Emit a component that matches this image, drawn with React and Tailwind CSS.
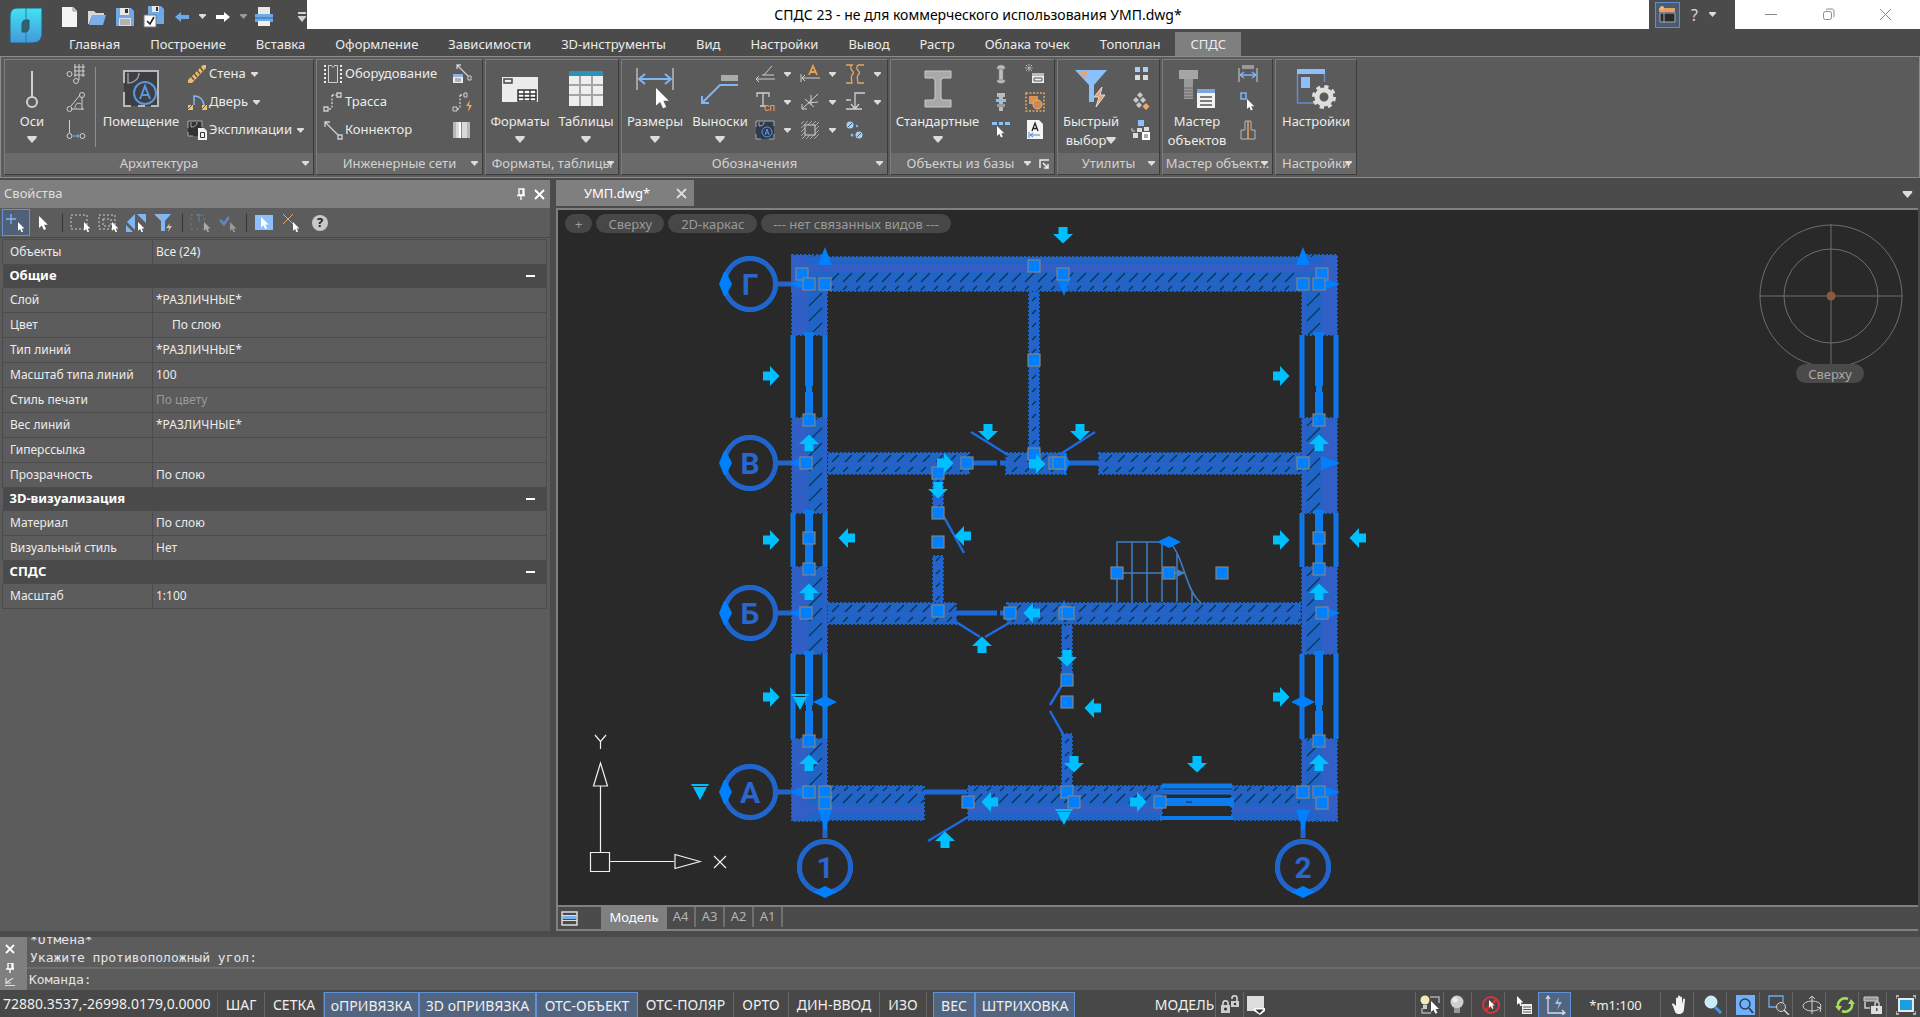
import React from "react";

const L = "#d0d0d0";
const B = "#7fb6f5";
const O = "#e6a664";

function Svg({ w = 20, h = 20, vb, children, cls = "" }) {
  return (
    <svg width={w} height={h} viewBox={vb || `0 0 ${w} ${h}`} fill="none" className={"shrink-0 " + cls} aria-hidden="true">
      {children}
    </svg>
  );
}

const Tri = ({ w = 7, h = 5, c = "#dcdcdc" }) => (
  <Svg w={w} h={h} vb="0 0 8 6">
    <path d="M0 0h8v1.5L4 6 0 1.5z" fill={c} />
  </Svg>
);

const Cursor = ({ x = 0, y = 0, s = 1, c = "#fff" }) => (
  <path transform={`translate(${x} ${y}) scale(${s})`} d="M0 0v11l2.6-2.3 1.8 4 2-.9-1.8-3.8H8z" fill={c} />
);

/* ---------- quick access icons ---------- */
const qa = {
  file: <Svg w={18} h={22}><path d="M1 1h11l4 4v16H1z" fill="#f4f4f4" /><path d="M12 1v4h4" fill="#cfcfcf" stroke="#999" /></Svg>,
  open: <Svg w={20} h={20}><path d="M1 4h6l2 2h8v3H5L2 17H1z" fill="#d8d8d8" /><path d="M5 8h14l-3 10H2z" fill="#79aee8" /></Svg>,
  save: <Svg w={20} h={20}><path d="M1 1h15l3 3v15H1z" fill="#6fa8e6" /><path d="M5 1h9v7H5z" fill="#e8e8e8" /><path d="M10 2h3v4h-3z" fill="#333" /><path d="M4 11h12v8H4z" fill="#ddd" /><path d="M5 13h10M5 15h10M5 17h10" stroke="#888" /></Svg>,
  saveAll: <Svg w={22} h={22}><path d="M5 0h13l3 3v15H5z" fill="#6fa8e6" /><path d="M9 0h7v6H9z" fill="#e8e8e8" /><path d="M13 1h2v4h-2z" fill="#333" /><path d="M1 9h12v12H1z" fill="#fff" stroke="#777" /><path d="M4 15l3 3 4-7" stroke="#222" strokeWidth="1.6" /></Svg>,
  undo: <Svg w={14} h={12}><path d="M0 6l6-5v3h8v4H6v3z" fill="#6fa8e6" /></Svg>,
  redo: <Svg w={14} h={12}><path d="M14 6L8 1v3H0v4h8v3z" fill="#fff" /></Svg>,
  print: <Svg w={20} h={20}><path d="M4 0h12v7H4z" fill="#e8e8e8" /><path d="M1 7h18v8H1z" fill="#6fa8e6" /><path d="M1 10h18v2H1z" fill="#4d88cc" /><path d="M4 14h12v5H4z" fill="#f0f0f0" /></Svg>,
};

/* ---------- ribbon icons ---------- */
const big = {
  axis: <Svg w={36} h={38}><path d="M18 1v26" stroke={L} strokeWidth="2" /><circle cx="18" cy="32" r="5" stroke={L} strokeWidth="2" /></Svg>,
  room: <Svg w={36} h={38}><path d="M1 1h34v35H1z" fill="#3d3f42" /><path d="M1 13V1h34v35h-7M22 36h-7M8 36H1V22" stroke="#b8b8b8" strokeWidth="2" /><path d="M5 3v10c6 0 11-4 11-10" stroke="#999" strokeWidth="1.5" /><circle cx="22" cy="23" r="11" stroke="#5b95dc" strokeWidth="2" /><path d="M17 29l5-13 5 13M19 25h6" stroke="#5b95dc" strokeWidth="2" /></Svg>,
  formats: <Svg w={38} h={30}><path d="M1 3h36v25H1z" fill="#ececec" /><path d="M3 5h8v4H3z" fill="#eee" stroke="#444" strokeWidth="1.5" /><path d="M17 16h18v11H17z" fill="#fff" stroke="#333" strokeWidth="1.5" /><path d="M17 20h18M17 23.500h18M23 16v11M29 16v11" stroke="#333" strokeWidth="1.3" /></Svg>,
  tables: <Svg w={36} h={38}><path d="M1 1h34v35H1z" fill="#eee" /><path d="M1 1h34v5H1z" fill="#2b93b8" /><path d="M1 15h34M1 25h34M12 6v30M24 6v30" stroke="#a5a5a5" strokeWidth="2" /></Svg>,
  dims: <Svg w={38} h={44}><path d="M1 1v22M37 1v22" stroke="#bbb" strokeWidth="1.5" /><path d="M3 12h32M9 7l-6 5 6 5M29 7l6 5-6 5" stroke={B} strokeWidth="2" /><Cursor x={20} y={21} s={1.600} /></Svg>,
  leader: <Svg w={40} h={36}><path d="M21 4h17v6H21z" fill="#aaa" /><path d="M38 14H20L2 32M2 25v7h7" stroke={B} strokeWidth="2" /></Svg>,
  beam: <Svg w={28} h={38}><path d="M1 1h26v7H19c-2 1-2 3-2 4v14c0 1 0 3 2 4h8v7H1v-7h8c2-1 2-3 2-4V12c0-1 0-3-2-4H1z" fill="#a9a9a9" stroke="#cacaca" /></Svg>,
  filter: <Svg w={34} h={40}><path d="M1 1h32L20 16v17h-5V16z" fill="#8cc0fa" /><path d="M4 2h10l-3 8z" fill="#e3a574" /><path d="M28 18l-8 10h5l-3 10 9-12h-5z" fill="#e3a574" stroke="#ddd" /></Svg>,
  wizard: <Svg w={38} h={40}><path d="M1 1h19v9H1z" fill="#a5a5a5" /><path d="M6 10h9v20H6z" fill="#999" /><path d="M6 19h9M6 22h9M6 25h9M6 28h9" stroke="#666" /><path d="M19 20h18v19H19z" fill="#f2f2f2" /><path d="M19 20h18v4H19z" fill="#7aa6dc" /><path d="M22 28h12M22 32h12M22 36h12" stroke="#555" strokeWidth="1.500" /></Svg>,
  settings: (
    <Svg w={40} h={42}>
      <path d="M1 1h28v5H1z" fill="#8cc0fa" /><path d="M1.500 6v29H18M28.500 6v8" stroke="#5f90cc" strokeWidth="1.500" /><path d="M5 9h9v11H5z" fill="#8cc0fa" />
      <circle cx="28" cy="29" r="7" stroke="#dedede" strokeWidth="5" />
      <circle cx="28" cy="29" r="10.500" stroke="#dedede" strokeWidth="3" strokeDasharray="4.200 4.050" />
    </Svg>
  ),
};

const sm = {
  grid: <Svg><path d="M8 3h11M8 7h11M8 11h11M9 0v13M13 0v13M17 0v13M13 13v3" stroke={L} strokeWidth="1" /><circle cx="3.500" cy="10" r="2.500" stroke={L} /><circle cx="10" cy="17" r="2.500" stroke={L} /></Svg>,
  arc: <Svg><path d="M16 5v13M5 17h13M14 3L5 14M15 12c-3-2-6 0-6 4" stroke={L} /><circle cx="16" cy="3" r="2.500" stroke={L} /><circle cx="3.500" cy="17" r="2.500" stroke={L} /></Svg>,
  drop: <Svg><path d="M3.500 0v13" stroke={L} /><circle cx="3.500" cy="16" r="2.500" stroke={L} /><circle cx="16.500" cy="16" r="2.500" stroke={L} /><path d="M7 16h6M11 14l2 2-2 2" stroke={B} /></Svg>,
  wall: <Svg><path d="M1 16L16 1h3v3L5 19H1z" fill="#e8bd72" /><path d="M4 12l3 4M7 9l3 4M10 6l3 4M13 3l3 4" stroke="#6b5733" strokeWidth="1.500" /></Svg>,
  door: <Svg><path d="M7 13V4c5 0 9 3 10 9" stroke={B} strokeWidth="1.500" /><path d="M1 13h5v5H1zM15 13h5v5h-5z" fill="#efc36e" /><path d="M1 17l4-4M15 17l4-4" stroke="#6b5733" /></Svg>,
  expl: <Svg><path d="M1 1h14v15H1z" fill="#333" /><path d="M1 8V1h14v6M1 12v4h5M4 2v5c4 0 6-2 6-5" stroke="#aaa" /><path d="M11 8h6l3 3v9h-9z" fill="#eee" /><path d="M13.500 12.500h4v5h-4z" stroke="#333" /></Svg>,
  equip: <Svg><path d="M5.500 1.500h3c0 2 3 2 3 0h3v17h-9z" stroke={L} /><path d="M2 1v18M18 1v18" stroke="#eee" strokeWidth="2" strokeDasharray="2 2" /></Svg>,
  route: <Svg><path d="M9 3v14M9 3h5M6 17h3" stroke={L} strokeWidth="1.300" strokeDasharray="2 1.500" /><path d="M14 1h4v4h-4zM1 15h4v4H1z" stroke={L} strokeWidth="1.300" /></Svg>,
  conn: <Svg><path d="M2 2l13 13M2 7V2h5" stroke={L} strokeWidth="1.300" /><path d="M15 15h4v4h-4z" stroke={L} strokeWidth="1.300" /></Svg>,
  connList: <Svg><path d="M5 1l11 11M5 5V1h4" stroke={L} strokeWidth="1.300" /><path d="M16 12h3v4h-3z" stroke={L} /><path d="M1 10h10v9H1z" fill="#eee" /><path d="M1 10h10v3H1z" fill="#8fb2dc" /><path d="M3 15h6M3 17h6" stroke="#777" /></Svg>,
  routeBolt: <Svg><path d="M8 3v14M8 3h4M5 17h3" stroke={L} strokeWidth="1.300" strokeDasharray="2 1.500" /><path d="M12 1h3v4h-3zM1 15h4v4H1z" stroke={L} /><path d="M18 8l-4 6h3l-1 6 4-7h-3z" fill={O} /></Svg>,
  book: <Svg><path d="M1 2h17v16H1z" fill="#dadada" /><path d="M1 2h3v16H1zM15 2h3v16h-3z" fill="#b8b8b8" /><path d="M7 2h2v16H7z" fill="#fff" /><path d="M9.500 2v16" stroke="#8a8a8a" /></Svg>,
  lvl: <Svg><path d="M2 15h18M4 12l-3 3 3 3M7 11h12M9 11L17 2" stroke={L} /></Svg>,
  Tsp: <Svg><path d="M2 5V1h12v4M8 1v13M5 14h6" stroke={L} strokeWidth="1.300" /><text x="9" y="19" fontSize="10" fill={O} fontFamily="Roboto">сп</text></Svg>,
  roomS: <Svg><path d="M1 1h18v18H1z" fill="#2f3a4d" /><path d="M1 7V1h18v5M19 14v5h-5M1 14v5h5M4 2v4c3 0 5-1 5-4" stroke="#aaa" /><circle cx="12" cy="12" r="5" stroke="#5b95dc" /><path d="M10 15l2-6 2 6M10.500 13h3" stroke="#5b95dc" /></Svg>,
  Adim: <Svg><path d="M1 10v8M2 14h18M5 11l-3 3 3 3" stroke={L} /><path d="M9 11l4-9 4 9M10.500 8h5" stroke="#f0a050" strokeWidth="1.800" /></Svg>,
  mark: <Svg><path d="M2 17L18 2M2 12v5h5M5 7l9 8M11 3v10M8 11l10-1" stroke={L} /></Svg>,
  insul: <Svg><path d="M1 4l3-3M1 8l7-7M1 12L12 1M1 16L16 1M2 19L19 2M6 19L19 6M10 19l9-9M14 19l5-5" stroke="#aaa" /><rect x="5" y="5" width="10" height="10" fill="#5a5a5a" stroke={L} /></Svg>,
  brk: <Svg><path d="M1 1h6c-5 5 5 6 0 10-2 3 0 5 0 8H1M13 1h6M13 1c-5 5 5 6 0 10-2 3 0 5 0 8h6" stroke={O} strokeWidth="1.300" /></Svg>,
  section: <Svg><path d="M10 17V1h10M1 17h16M6 12l4 5 4-5M1 8h5" stroke={L} strokeWidth="1.300" /></Svg>,
  nodes: <Svg><circle cx="5" cy="5" r="3.500" fill="#a8cdf2" /><circle cx="14" cy="15" r="3.500" fill="#a8cdf2" /><circle cx="7" cy="15" r="1.500" fill={B} /><circle cx="12" cy="6" r="1.200" fill={B} /><path d="M3 7l4-4M12 17l4-4" stroke="#3d5f88" /></Svg>,
  bolt: <Svg><path d="M6 4c0-4 8-4 8 0v1H6zM8 5h4v11H8zM6 16h8v1c0 3-8 3-8 0z" fill="#bcbcbc" stroke="#888" strokeWidth=".5" /></Svg>,
  boltB: <Svg><path d="M6 1h8v4H6zM8 5h4v14H8z" fill="#bbb" /><path d="M5 7h10v3H5z" fill="#8cc0fa" /><path d="M6 12h8v3H6z" fill="#9a9a9a" /></Svg>,
  barSel: <Svg><path d="M1 2h5v3H1zM8 2h4v3H8zM14 2h5v3h-5z" fill="#8cc0fa" /><Cursor x={6} y={6} s={0.9} /></Svg>,
  db: <Svg><path d="M1 1l6 6M7 1L1 7M4 0v8M0 4h8" stroke="#ccc" strokeDasharray="1.500 1" /><path d="M7 9h12v10H7z" fill="#eee" /><path d="M7 9h12v3H7z" fill="#bbb" /><path d="M9 14h8v3H9z" stroke="#555" /></Svg>,
  dbSel: <Svg><rect x="1" y="1" width="18" height="18" stroke={O} strokeWidth="1.500" strokeDasharray="2 1.500" /><path d="M4 4h9v8H4z" fill="#d99355" /><circle cx="12.500" cy="12.500" r="4.500" fill="#c98a55" stroke="#efb884" /></Svg>,
  docA: <Svg><path d="M2 0h12l4 4v15H2z" fill="#f4f4f4" /><path d="M7 11l3-8 3 8M8 8.500h4" stroke="#222" strokeWidth="1.300" /><path d="M4 12v6M5 15h10M8 13l-3 2 3 2" stroke="#4a86cc" /></Svg>,
  four: <Svg><path d="M4 3h5v5H4z" fill="#a9d0fa" /><path d="M4 11h5v5H4zM12 11h5v5h-5z" fill="#dcdcdc" /><path d="M12 3h5v5h-5z" fill="#a9d0fa" /></Svg>,
  dia: <Svg><path d="M9 0l3 3-3 3-3-3zM5 5l3 3-3 3-3-3zM12 5l3 3-3 3-3-3zM8 10l3 3-3 3-3-3z" fill="#c9c9c9" /><path d="M15 11l3.500 3.500L15 18l-3.500-3.500z" fill="#f0a868" /></Svg>,
  tree: <Svg><path d="M7 0h6v6H7z" fill="#8cc0fa" /><path d="M2 13h5v5H2zM6 8h5v4H6zM13 7h5v4h-5z" fill="#ddd" /><path d="M11 12h8v8h-8z" fill="#fff" /><path d="M13 15h4M13 17h4" stroke="#555" /><path d="M1 11h3M1 8v3" stroke="#ccc" /></Svg>,
  dimS: <Svg><path d="M4 1h12v4H4z" fill="#999" /><path d="M1 4v14M19 4v14" stroke={L} /><path d="M2 11h16M6 8l-4 3 4 3M14 8l4 3-4 3" stroke={B} strokeWidth="1.300" /></Svg>,
  pick: <Svg><path d="M3 1h5v6H3z" stroke={B} strokeWidth="1.500" /><Cursor x={9} y={7} s={0.9} /></Svg>,
  part: <Svg><path d="M7 1h6v9h4v9H3v-9h4z" stroke="#bbb" /><path d="M10 1v18" stroke={O} strokeWidth="1.500" /></Svg>,
};

/* ---------- ribbon building blocks ---------- */
function Group({ title, w, children, launcher }) {
  return (
    <section className={"flex h-[116px] shrink-0 flex-col border border-[#7d7d7d] border-r-[#3c3c3c] border-b-[#3c3c3c] " + w}>
      <div className="flex flex-1">{children}</div>
      <div className={"relative flex h-[21px] items-center justify-center bg-[#6a6a6a] whitespace-nowrap text-[#d2d2d2] " + (launcher ? "pr-[24px]" : "")}>
        <span>{title}</span>
        <div className="absolute inset-y-0 right-[4px] flex items-center gap-[8px]">
          <button type="button" aria-label={title} className="flex w-[8px] justify-center"><Tri /></button>
          {launcher && (
            <button type="button" aria-label="Параметры">
              <Svg w={11} h={10}><path d="M1 9V1h9M4 4l5 5M9 5v4H5" stroke="#eee" strokeWidth="1.500" /></Svg>
            </button>
          )}
        </div>
      </div>
    </section>
  );
}

function BigBtn({ icon, label, label2, w, arrow }) {
  return (
    <button type="button" className={"flex shrink-0 flex-col items-center whitespace-nowrap " + w}>
      <span className="flex h-[52px] items-center justify-center pt-[6px]">{icon}</span>
      <span className="h-[19px] leading-[19px]">{label}</span>
      {label2 ? (
        <span className="flex h-[19px] items-center leading-[19px]">{label2}{arrow && <Tri w={10} h={7} />}</span>
      ) : (
        arrow && <span className="mt-[5px]"><Tri w={10} h={7} /></span>
      )}
    </button>
  );
}

function Col({ items, w = "w-[34px]" }) {
  return (
    <div className={"flex shrink-0 flex-col " + w}>
      {items.map(([icon, name, arrow]) => (
        <button key={name} type="button" aria-label={name} className={"flex h-[28px] items-center gap-[9px] " + (arrow ? "pl-[3px]" : "justify-center")}>
          {icon}
          {arrow && <Tri />}
        </button>
      ))}
    </div>
  );
}

function Rows({ items, w }) {
  return (
    <div className={"flex shrink-0 flex-col " + w}>
      {items.map(([icon, label, arrow]) => (
        <button key={label} type="button" className="flex h-[28px] items-center gap-[2px] whitespace-nowrap">
          {icon}
          <span>{label}</span>
          {arrow && <span className="ml-[3px]"><Tri /></span>}
        </button>
      ))}
    </div>
  );
}

const tabs = ["Главная", "Построение", "Вставка", "Оформление", "Зависимости", "3D-инструменты", "Вид", "Настройки", "Вывод", "Растр", "Облака точек", "Топоплан", "СПДС"];

function TitleAndTabs() {
  return (
    <header className="flex h-[56px] bg-[#4b4b4b]">
      <div className="w-[54px] shrink-0 pt-[7px] pl-[9px]">
        <Svg w={34} h={37}>
          <defs><linearGradient id="lg" x1="0" y1="0" x2="0" y2="1"><stop offset="0" stopColor="#41e3f2" /><stop offset="1" stopColor="#4598da" /></linearGradient></defs>
          <path d="M9 1h24v25c0 7-4 10-10 10H1V11C1 4 3 1 9 1z" fill="url(#lg)" stroke="#285b70" />
          <path d="M17 1v12M17 24v12" stroke="#2f7a94" />
          <path d="M20 13h-3c-3 0-4 2-4 5v7h3c3 0 4-2 4-5z" fill="#35606e" stroke="#285b70" />
        </Svg>
      </div>
      <div className="flex min-w-0 flex-1 flex-col">
        <div className="flex h-[29px]">
          <div className="flex w-[253px] shrink-0 items-center pt-[4px] pl-[7px]">
            <button type="button" aria-label="Создать" className="w-[26px]">{qa.file}</button>
            <button type="button" aria-label="Открыть" className="w-[28px]">{qa.open}</button>
            <button type="button" aria-label="Сохранить" className="w-[28px]">{qa.save}</button>
            <button type="button" aria-label="Сохранить все" className="w-[32px]">{qa.saveAll}</button>
            <button type="button" aria-label="Отменить" className="w-[24px]">{qa.undo}</button>
            <button type="button" aria-label="Список отмены" className="w-[17px]"><Tri /></button>
            <button type="button" aria-label="Вернуть" className="w-[24px]">{qa.redo}</button>
            <button type="button" aria-label="Список возврата" className="w-[14px]"><Tri c="#999" /></button>
            <button type="button" aria-label="Печать" className="w-[44px]">{qa.print}</button>
            <button type="button" aria-label="Настройка панели">
              <Svg w={8} h={11}><path d="M0 1h8v2H0zM0 5h8v1L4 11 0 6z" fill="#d0d0d0" /></Svg>
            </button>
          </div>
          <h1 className="flex flex-1 items-center justify-center bg-white text-[14px] text-black">
            СПДС 23 - не для коммерческого использования УМП.dwg*
          </h1>
          <div className="flex w-[86px] items-center pl-[6px]">
            <button type="button" aria-label="Лента" className="flex h-[26px] w-[25px] items-center justify-center border border-[#5f8fd0] bg-[#4c5b73]">
              <Svg w={17} h={17}><path d="M0 2h16v4H0z" fill="#e8a060" /><path d="M1 7h15v9H1z" fill="#2c2c2c" stroke="#aaa" /><path d="M5 7v9" stroke="#aaa" /><circle cx="3" cy="2" r="2" fill="#f0b880" /></Svg>
            </button>
            <button type="button" aria-label="Справка" className="w-[29px] text-[16px] text-[#d8d8d8]">?</button>
            <button type="button" aria-label="Меню справки"><Tri /></button>
          </div>
          <div className="flex w-[185px] items-center bg-white text-[#8a8a8a]">
            <button type="button" aria-label="Свернуть" className="flex w-[74px] justify-center"><Svg w={14} h={14}><path d="M1 6.500h12" stroke="#888" /></Svg></button>
            <button type="button" aria-label="Восстановить" className="flex w-[45px] justify-center"><Svg w={13} h={13}><rect x="1.500" y="3.500" width="8" height="8" rx="2" stroke="#888" /><path d="M4 2c0-1 1-1 2-1h4c1 0 2 1 2 2v4c0 1 0 2-1 2" stroke="#888" /></Svg></button>
            <button type="button" aria-label="Закрыть" className="flex w-[72px] justify-center"><Svg w={13} h={13}><path d="M1 1l11 11M12 1L1 12" stroke="#888" /></Svg></button>
          </div>
        </div>
        <nav className="flex h-[27px] items-end">
          {tabs.map((t) => (
            <button key={t} type="button" className={"h-[24px] px-[15px] leading-[25px] whitespace-nowrap " + (t === "СПДС" ? "bg-[#7f7f7f]" : "")}>{t}</button>
          ))}
        </nav>
      </div>
    </header>
  );
}

function Ribbon() {
  return (
    <div className="flex h-[122px] gap-[2px] border border-[#8c8c8c] bg-[#5b5b5b] px-[3px] pt-[2px]">
      <Group title="Архитектура" w="w-[310px]">
        <BigBtn icon={big.axis} label="Оси" w="w-[54px]" arrow />
        <Col items={[[sm.grid, "Сетка осей"], [sm.arc, "Дуговые оси"], [sm.drop, "Ось"]]} />
        <div className="mt-[7px] mr-[5px] ml-[2px] h-[80px] w-px bg-[#8e8e8e]" />
        <BigBtn icon={big.room} label="Помещение" w="w-[80px]" />
        <Rows w="ml-[6px]" items={[[sm.wall, "Стена", 1], [sm.door, "Дверь", 1], [sm.expl, "Экспликации", 1]]} />
      </Group>
      <Group title="Инженерные сети" w="w-[167px]">
        <Rows w="ml-[6px] w-[122px]" items={[[sm.equip, "Оборудование"], [sm.route, "Трасса"], [sm.conn, "Коннектор"]]} />
        <Col items={[[sm.connList, "Список"], [sm.routeBolt, "Кабель"], [sm.book, "Каталог"]]} />
      </Group>
      <Group title="Форматы, таблицы" w="w-[134px]">
        <BigBtn icon={big.formats} label="Форматы" w="w-[68px]" arrow />
        <BigBtn icon={big.tables} label="Таблицы" w="w-[64px]" arrow />
      </Group>
      <Group title="Обозначения" w="w-[267px]">
        <BigBtn icon={big.dims} label="Размеры" w="w-[66px]" arrow />
        <BigBtn icon={big.leader} label="Выноски" w="w-[64px]" arrow />
        <Col w="w-[45px]" items={[[sm.lvl, "Уровень", 1], [sm.Tsp, "Текст", 1], [sm.roomS, "Помещение", 1]]} />
        <Col w="w-[45px]" items={[[sm.Adim, "Размерный текст", 1], [sm.mark, "Маркер", 1], [sm.insul, "Изоляция", 1]]} />
        <div className="w-[45px]">
          <Col w="w-[45px]" items={[[sm.brk, "Обрыв", 1], [sm.section, "Разрез", 1]]} />
          <button type="button" aria-label="Узел" className="ml-[3px] flex h-[28px] items-center">{sm.nodes}</button>
        </div>
      </Group>
      <Group title="Объекты из базы" w="w-[165px]" launcher>
        <BigBtn icon={big.beam} label="Стандартные" w="w-[93px]" arrow />
        <Col items={[[sm.bolt, "Болт"], [sm.boltB, "Соединение"], [sm.barSel, "Выбор"]]} />
        <Col items={[[sm.db, "База"], [sm.dbSel, "Выбор из базы"], [sm.docA, "Документ"]]} />
      </Group>
      <Group title="Утилиты" w="w-[103px]">
        <BigBtn icon={big.filter} label="Быстрый" label2="выбор" w="w-[66px]" arrow />
        <Col items={[[sm.four, "Плитка"], [sm.dia, "Сортировка"], [sm.tree, "Дерево"]]} />
      </Group>
      <Group title="Мастер объект..." w="w-[111px]">
        <BigBtn icon={big.wizard} label="Мастер" label2="объектов" w="w-[68px]" />
        <Col items={[[sm.dimS, "Размер"], [sm.pick, "Указать"], [sm.part, "Деталь"]]} />
      </Group>
      <Group title="Настройки" w="w-[82px]">
        <BigBtn icon={big.settings} label="Настройки" w="w-[80px]" />
      </Group>
    </div>
  );
}

/* ---------- properties ---------- */
const props = [
  ["Объекты", "Все (24)"],
  ["#Общие"],
  ["Слой", "*РАЗЛИЧНЫЕ*"],
  ["Цвет", "По слою", "indent"],
  ["Тип линий", "*РАЗЛИЧНЫЕ*"],
  ["Масштаб типа линий", "100"],
  ["Стиль печати", "По цвету", "dim"],
  ["Вес линий", "*РАЗЛИЧНЫЕ*"],
  ["Гиперссылка", ""],
  ["Прозрачность", "По слою"],
  ["#3D-визуализация"],
  ["Материал", "По слою"],
  ["Визуальный стиль", "Нет"],
  ["#СПДС"],
  ["Масштаб", "1:100"],
];

const Sep = () => <span className="mr-[3px] ml-[4px] h-[18px] w-px bg-[#333]" />;
const TB = ({ name, children, on, w = "w-[28px]" }) => (
  <button type="button" aria-label={name} className={"flex h-[27px] items-center justify-center " + w + (on ? " border border-[#5f92d6] bg-[#506078]" : "")}>{children}</button>
);

function Properties() {
  return (
    <aside className="flex w-[550px] shrink-0 flex-col bg-[#5c5c5c]">
      <div className="flex h-[28px] items-center bg-[#7f7f7f] pr-[5px] pl-[4px] text-[#dedede]">
        <h2 className="flex-1">Свойства</h2>
        <button type="button" aria-label="Закрепить" className="w-[18px]"><Svg w={10} h={12}><path d="M3 1h5v6H3zM1 7.500h8M5 8v4M7 1v6" stroke="#fff" strokeWidth="1.300" /></Svg></button>
        <button type="button" aria-label="Закрыть панель"><Svg w={11} h={11}><path d="M1 1l9 9M10 1l-9 9" stroke="#fff" strokeWidth="2" /></Svg></button>
      </div>
      <div className="flex h-[30px] items-center border-b border-[#494949] pl-[2px]">
        <TB name="Добавить к выбору" on><Svg><path d="M0 6h10M5 1v10" stroke={B} strokeWidth="1.300" /><Cursor x={12} y={9} s={0.8} /></Svg></TB>
        <TB name="Выбрать"><Cursor16 /></TB>
        <Sep />
        <TB name="Рамка"><Svg><path d="M1 2h16v14H1z" stroke={L} strokeDasharray="2 2" /><Cursor x={14} y={9} s={0.8} /></Svg></TB>
        <TB name="Секущая рамка"><Svg><path d="M1 2h16v14H1zM5 6h8v7H5z" stroke={L} strokeDasharray="2 2" /><Cursor x={14} y={9} s={0.8} /></Svg></TB>
        <TB name="Инвертировать"><Svg><path d="M9 1v16L1 9zM11 1h9v9zM0 12l7 7H0z" fill={B} /><Cursor x={12} y={9} s={0.8} /></Svg></TB>
        <TB name="Фильтр"><Svg><path d="M0 1h17l-6 7v10H7V8z" fill={B} /><path d="M2 2h5L6 5z" fill={O} /><path d="M16 10l-4 5h3l-1 4 4-6h-3z" fill="#d8c0a8" /></Svg></TB>
        <Sep />
        <TB name="Вложенные"><Svg><path d="M1 2h13v14H1z" stroke="#888" strokeDasharray="1.500 4" /><path d="M9 1v8M7 3l2-2 2 2" stroke="#5c86b8" /><Cursor x={14} y={9} s={0.8} c="#aaa" /></Svg></TB>
        <TB name="Применить"><Svg><path d="M2 7l4 4 5-7" stroke="#5c86b8" strokeWidth="3" /><Cursor x={12} y={9} s={0.8} c="#999" /></Svg></TB>
        <Sep />
        <TB name="Подсветка"><Svg><path d="M1 2h18v15H1z" fill="#8cc0fa" /><Cursor x={7} y={4} s={0.95} /></Svg></TB>
        <TB name="Снять выбор"><Svg><path d="M1 1l10 10M11 1L1 11" stroke={O} /><Cursor x={11} y={9} s={0.8} /></Svg></TB>
        <TB name="Справка по свойствам"><span className="flex h-[16px] w-[16px] items-center justify-center rounded-full bg-[#c8c8c8] font-bold text-[#222]">?</span></TB>
      </div>
      <table className="mt-px mr-[3px] ml-[2px] border-collapse text-[12px]">
        <tbody>
          {props.map(([k, v, mode]) =>
            k[0] === "#" ? (
              <tr key={k} className="h-[23px] bg-[#4a4a4a]">
                <th colSpan={2} scope="colgroup" className="py-0 pr-[12px] pl-[7px] text-left text-[13px] font-bold text-white">
                  <span className="flex h-[22px] items-center justify-between">
                    {k.slice(1)}
                    <button type="button" aria-label={"Свернуть " + k.slice(1)}><Svg w={9} h={3}><path d="M0 0h9v2H0z" fill="#fff" /></Svg></button>
                  </span>
                </th>
              </tr>
            ) : (
              <tr key={k} className="h-[25px] border-y border-[#4c4c4c]">
                <th scope="row" className="w-[150px] border-x border-[#4c4c4c] py-0 pl-[7px] text-left font-normal">{k}</th>
                <td className="border-r border-[#4c4c4c] p-0">
                  <input aria-label={k} defaultValue={v} className={"block w-full bg-transparent leading-[22px] outline-none " + (mode === "indent" ? "pl-[19px]" : mode === "dim" ? "pl-[3px] text-[#9a9a9a]" : "pl-[3px]")} />
                </td>
              </tr>
            )
          )}
        </tbody>
      </table>
    </aside>
  );
}
function Cursor16() {
  return <Svg w={12} h={18}><Cursor x={1} y={2} s={1.100} /></Svg>;
}

/* ---------- drawing ---------- */
const grips = [[802, 274], [809, 284], [825, 284], [1034, 266], [1063, 274], [1034, 360], [809, 420], [1034, 454], [806, 463], [967, 463], [938, 473], [1055, 463], [1059, 463], [938, 513], [938, 542], [809, 538], [809, 569], [806, 613], [938, 611], [1010, 613], [1065, 613], [1068, 613], [1303, 284], [1322, 274], [1319, 284], [1319, 420], [1303, 463], [1319, 538], [1319, 569], [1322, 613], [1117, 573], [1169, 573], [1222, 573], [809, 741], [809, 792], [825, 792], [825, 803], [968, 802], [1067, 680], [1067, 702], [1067, 792], [1074, 802], [1319, 741], [1160, 802], [1303, 792], [1319, 792], [1322, 803]];
const arrows = {
  0: [[771, 376], [771, 540], [945, 463], [1037, 464], [1281, 376], [1281, 540], [771, 697], [1281, 697], [1138, 802]],
  180: [[847, 538], [963, 536], [1358, 538], [1032, 613], [1093, 708], [990, 802]],
  90: [[1063, 235], [988, 432], [1080, 432], [938, 490], [1067, 658], [1074, 764], [1197, 764]],
  270: [[809, 443], [1319, 443], [809, 592], [1319, 592], [809, 763], [1319, 763], [982, 645], [945, 840]],
};
const hWalls = [[828, 452, 141, 23], [1006, 452, 60, 23], [1099, 452, 202, 23], [828, 602, 128, 23], [1007, 602, 294, 23]];
const vThin = [[1029, 292, 10, 160], [933, 472, 10, 40], [933, 556, 10, 46], [1062, 625, 10, 52], [1062, 734, 10, 51]];
const sideSegs = [[255, 80], [418, 95], [567, 87], [739, 82]];
const wins = [[335, 83], [513, 54], [654, 85]];
const bubbles = [["Г", 750, 284], ["В", 750, 463], ["Б", 750, 613], ["А", 750, 792], ["1", 825, 867], ["2", 1303, 867]];

function Plan() {
  const W = "#2264cb";
  const P = "#325fc6";
  const F = "#2064c6";
  const H = "#0c3458";
  const E = { stroke: "#1c64c6", strokeWidth: 2, strokeDasharray: "2 2" };
  return (
    <svg width="860" height="694" viewBox="558 210 860 694" className="block" role="img" aria-label="План этажа" fill="none">
      <defs>
        <pattern id="hb" width="13" height="22" patternUnits="userSpaceOnUse" x="828" y="271"><path d="M2 11L11 2M2 19l4-4" stroke={H} strokeWidth="1.500" /></pattern>
        <pattern id="hs" width="13" height="22" patternUnits="userSpaceOnUse" x="828" y="785"><path d="M2 18L11 9M3 6l4-4" stroke={H} strokeWidth="1.500" /></pattern>
        <pattern id="hw" width="13" height="23" patternUnits="userSpaceOnUse" x="828" y="452"><path d="M4 10l7-7M2 20l5-5" stroke={H} strokeWidth="1.500" /></pattern>
        <pattern id="hw2" width="13" height="23" patternUnits="userSpaceOnUse" x="828" y="602"><path d="M4 10l7-7M2 20l5-5" stroke={H} strokeWidth="1.500" /></pattern>
        <pattern id="hl" width="17" height="15" patternUnits="userSpaceOnUse" x="807" y="292"><path d="M2 14L15 1" stroke={H} strokeWidth="1.300" /></pattern>
        <pattern id="hr" width="17" height="15" patternUnits="userSpaceOnUse" x="1305" y="292"><path d="M2 14L15 1" stroke={H} strokeWidth="1.300" /></pattern>
        <pattern id="ht" width="10" height="13" patternUnits="userSpaceOnUse" x="1029" y="292"><path d="M3 9l4-4" stroke={H} strokeWidth="1.400" /></pattern>
        <pattern id="ht2" width="10" height="13" patternUnits="userSpaceOnUse" x="933" y="292"><path d="M3 9l4-4" stroke={H} strokeWidth="1.400" /></pattern>
        <pattern id="ht3" width="10" height="13" patternUnits="userSpaceOnUse" x="1062" y="292"><path d="M3 9l4-4" stroke={H} strokeWidth="1.400" /></pattern>
      </defs>

      {/* outer walls */}
      {sideSegs.map(([y, h]) => (
        <g key={y}>
          <rect x="792" y={y} width="35" height={h} fill={P} {...E} />
          <rect x="807" y={y} width="17" height={h} fill={F} />
          <rect x="807" y={y} width="17" height={h} fill="url(#hl)" />
          <rect x="1302" y={y} width="35" height={h} fill={P} {...E} />
          <rect x="1305" y={y} width="17" height={h} fill={F} />
          <rect x="1305" y={y} width="17" height={h} fill="url(#hr)" />
        </g>
      ))}
      <rect x="792" y="257" width="545" height="34" fill={F} {...E} />
      <rect x="792" y="264" width="545" height="8" fill={P} />
      <path d="M793 259h543" stroke={P} strokeDasharray="3 1" />
      <rect x="828" y="271" width="473" height="21" fill="url(#hb)" />
      <path d="M828 284h473" stroke={P} strokeWidth="1.500" />
      <rect x="792" y="256" width="15" height="36" fill={P} />
      <rect x="1323" y="256" width="14" height="36" fill={P} />
      {[[792, 132], [968, 194], [1232, 105]].map(([x, w]) => (
        <g key={x}>
          <rect x={x} y="786" width={w} height="34" fill={F} {...E} />
          <rect x={x} y="806" width={w} height="8" fill={P} />
          <path d={`M${x} 792h${w}`} stroke={P} strokeWidth="1.500" />
        </g>
      ))}
      <rect x="830" y="785" width="94" height="22" fill="url(#hs)" />
      <rect x="970" y="785" width="191" height="22" fill="url(#hs)" />
      <rect x="1234" y="785" width="66" height="22" fill="url(#hs)" />
      <rect x="792" y="785" width="15" height="35" fill={P} />
      <rect x="1323" y="785" width="14" height="35" fill={P} />

      {/* inner walls */}
      {hWalls.map(([x, y, w, h]) => (
        <g key={x + "-" + y}>
          <rect x={x} y={y + 1} width={w} height={h - 2} fill={F} {...E} />
          <rect x={x} y={y} width={w} height={h} fill={y < 500 ? "url(#hw)" : "url(#hw2)"} />
          <path d={`M${x} ${y + 11.5}h${w}`} stroke={P} strokeWidth="2" />
        </g>
      ))}
      {vThin.map(([x, y, w, h]) => (
        <g key={x + "-" + y}>
          <rect x={x} y={y} width={w} height={h} fill={W} {...E} />
          <rect x={x} y={y} width={w} height={h} fill={x === 933 ? "url(#ht2)" : x === 1062 ? "url(#ht3)" : "url(#ht)"} />
        </g>
      ))}

      {/* windows */}
      {wins.map(([y, h]) =>
        [793, 1302].map((x) => (
          <g key={x + "-" + y} stroke="#0a7cf0">
            <path d={`M${x} ${y}v${h}M${x + (x < 1000 ? 32 : 34)} ${y}v${h}`} strokeWidth="5" />
            <path d={`M${x} ${y}v${h}M${x + (x < 1000 ? 32 : 34)} ${y}v${h}`} strokeWidth="1" stroke="#2a62cf" />
            <path d={`M${x + (x < 1000 ? 16 : 17)} ${y}v${h}`} strokeWidth="8" />
            <path d={`M${x + (x < 1000 ? 11 : 12)} ${y - 1}h10`} strokeWidth="4" />
            {h > 60 && <path d={`M${x + (x < 1000 ? 12.5 : 13.5)} ${y + 51}v6m7 0v-6`} stroke="#262c36" />}
          </g>
        ))
      )}
      <g stroke="#0a7cf0">
        <path d="M1162 786h70M1162 792h70" strokeWidth="5" />
        <path d="M1162 792h70" strokeWidth="3" stroke="#2264cf" />
        <path d="M1162 802h70" strokeWidth="8" />
        <path d="M1186 802h6" stroke="#222" />
        <path d="M1232 797v10" strokeWidth="4" />
        <path d="M1160 818h73" strokeWidth="4" />
      </g>

      {/* openings and door leaves */}
      <path d="M969 463h28M1000 463h8M1066 463h33M956 613h41M1000 613h8M924 792h43" stroke="#1d68d6" strokeWidth="5" />
      <path d="M971 432l37 23M1095 432l-36 23M944 517l20 36M956 622l24 15M985 637l24-14M1062 685l-12 20M1050 711l13 23M928 841l40-24" stroke="#1c6be0" strokeWidth="2.500" />

      {/* stair */}
      <path d="M1169 542h-52v60M1132 542v60M1147 542v60M1162 542v60M1177 553v49M1192 592v10M1117 573h68M1169 542c14 12 16 45 29 58l3 3" stroke="#3c7fc6" strokeWidth="1.500" />
      <path d="M1177 569l8 4-8 4z" fill="#3c7fc6" />

      {/* axes */}
      {bubbles.map(([t, x, y]) => (
        <g key={t}>
          <circle cx={x} cy={y} r="25.500" stroke={W} strokeWidth="5" />
          <circle cx={x} cy={y} r="27.500" stroke="#1070dc" strokeWidth="1" />
          <text x={x} y={y + 11} textAnchor="middle" fontFamily="Roboto, sans-serif" fontWeight="700" fontSize="30" fill="#2a66cc">{t}</text>
          {x === 750 ? (
            <>
              <path d={`M778 ${y}h20`} stroke={W} strokeWidth="5" />
              <path d={`M790 ${y}l14-6v12z`} fill="#0080ff" />
              <path d={`M719 ${y}l5-12h2l6 12-6 12h-2z`} fill="#0080ff" />
            </>
          ) : (
            <>
              <path d={`M${x} 838v-22`} stroke={W} strokeWidth="5" />
              <path d={`M${x - 7} 810h14l-5 14v6h-4v-6z`} fill="#0080ff" />
              <path d={`M${x - 12} 892l12-6 12 6-12 6z`} fill="#0080ff" />
            </>
          )}
        </g>
      ))}
      <path d="M825 247l7 18h-14zM1303 247l7 18h-14zM1057 278h14l-7 18zM1321 277l19 7-19 7zM1321 456l19 7-19 7zM1323 606l17 7-17 7zM1323 786l17 6-17 6zM1064 450l6 13-6 13zM1064 600l6 12h-12z" fill="#0080ff" />
      <path d="M813 702l12-6 12 6-12 6zM1291 702l12-6 12 6-12 6zM1157 542l12-6 12 6-12 6z" fill="#0080ff" />

      {grips.map(([x, y], i) => (
        <rect key={i} x={x - 6} y={y - 6} width="12" height="12" fill="#0080ff" stroke="#808488" strokeWidth="1.200" />
      ))}
      {Object.entries(arrows).map(([r, pts]) =>
        pts.map(([x, y]) => (
          <path key={x + "-" + y} transform={`translate(${x} ${y}) rotate(${r})`} d="M-8-4.500h7V-10l9.500 10L-1 10V4.500h-7z" fill="#00bfff" />
        ))
      )}
      {[[700, 792], [800, 702], [1064, 817]].map(([x, y]) => (
        <path key={x} d={`M${x - 9} ${y - 8}h18l-1 2h-16zM${x - 7} ${y - 5}h14l-7 13z`} fill="#00bfff" />
      ))}

      {/* coordinate system marker */}
      <g stroke="#f0f0f0" strokeWidth="1.200">
        <path d="M590.500 852.500h19v19h-19zM600.500 852v-66M610 861.500h64M600.500 763l-7 23h14zM700 861.500l-25-7v14z" />
        <path d="M595 735l5.500 6.500 5.500-6.500M600.500 741v8M714 856l12 12M726 856l-12 12" />
      </g>
    </svg>
  );
}

const chips = [["+", "px-[10px]"], ["Сверху", "px-[12px]"], ["2D-каркас", "px-[13px]"], ["--- нет связанных видов ---", "px-[12px]"]];

function Drawing() {
  return (
    <div className="relative min-h-0 flex-1 overflow-hidden border-t-2 border-l-2 border-[#808080] bg-[#292929]">
      <Plan />
      <div className="absolute top-[4px] left-[7px] flex gap-[4px] text-[#9a9a9a]">
        {chips.map(([t, p]) => (
          <button key={t} type="button" className={"h-[19px] rounded-full bg-[#474747] leading-[18px] " + p}>{t}</button>
        ))}
      </div>
      <div className="absolute top-[14px] right-[15px] flex w-[144px] flex-col items-center">
        <Svg w={144} h={144}>
          <circle cx="72" cy="72" r="71" stroke="#6e6e6e" /><circle cx="72" cy="72" r="47" stroke="#6e6e6e" />
          <path d="M72 0v144M0 72h144" stroke="#6e6e6e" /><circle cx="72" cy="72" r="4.500" fill="#8a5a3c" />
        </Svg>
        <button type="button" className="-mt-[4px] mr-[2px] h-[19px] rounded-full bg-[#4a4a4a] px-[12px] leading-[18px] text-[#a8a8a8]">Сверху</button>
      </div>
    </div>
  );
}

function Documents() {
  return (
    <main className="flex min-w-0 flex-1 flex-col bg-[#4b4b4b] pr-[2px] pl-[6px]">
      <div className="flex h-[28px] items-start justify-between">
        <div className="flex h-[26px] w-[138px] items-center bg-[#7f7f7f] pt-px text-white">
          <button type="button" className="w-[120px] pl-[2px] text-center">УМП.dwg*</button>
          <button type="button" aria-label="Закрыть документ"><Svg w={11} h={11}><path d="M1 1l9 9M10 1l-9 9" stroke="#ddd" strokeWidth="1.800" /></Svg></button>
        </div>
        <button type="button" aria-label="Список документов" className="mt-[11px] mr-[5px]"><Tri w={11} h={7} /></button>
      </div>
      <Drawing />
      <div className="flex h-[26px] border-2 border-r-0 border-[#808080]">
        <button type="button" aria-label="Список листов" className="flex w-[43px] items-center pl-[3px]">
          <Svg w={17} h={15}><path d="M1 1h15v13H1z" stroke="#ddd" strokeWidth="1.500" /><path d="M2 5h13v3H2z" fill="#79aef0" /><path d="M1 4.500h15M1 9.500h15" stroke="#ddd" /></Svg>
        </button>
        <button type="button" className="w-[66px] bg-[#7f7f7f] text-white">Модель</button>
        {["A4", "A3", "A2", "A1"].map((t) => (
          <button key={t} type="button" className="mb-[2px] w-[29px] border-r-2 border-[#707070] text-[#b4b4b4]">{t}</button>
        ))}
      </div>
    </main>
  );
}

/* ---------- command line and status bar ---------- */
function CommandLine() {
  return (
    <section className="flex h-[53px] bg-[#5c5c5c] font-['DejaVu_Sans_Mono','Liberation_Mono',monospace] text-[#e4e4e4]">
      <div className="flex w-[27px] shrink-0 flex-col items-start gap-[9px] bg-[#7f7f7f] pt-[7px] pl-[5px]">
        <button type="button" aria-label="Закрыть командную строку" className="h-[10px]"><Svg w={10} h={10} cls="block"><path d="M1 1l8 8M9 1L1 9" stroke="#fff" strokeWidth="1.800" /></Svg></button>
        <button type="button" aria-label="Закрепить командную строку" className="h-[10px]"><Svg w={10} h={10} cls="block"><path d="M3 0h5v6H3zM1 6h8M5 6v4M7 0v6" stroke="#fff" strokeWidth="1.300" /></Svg></button>
        <button type="button" aria-label="Развернуть" className="-mt-[4px] h-[8px]"><Svg w={10} h={8} cls="block"><path d="M1 0v6M1 5h5M1 5l7-5M0 7.500h10" stroke="#ddd" strokeWidth="1.200" /></Svg></button>
      </div>
      <div className="flex min-w-0 flex-1 flex-col">
        <div className="flex h-[32px] flex-col justify-end overflow-hidden border-b-2 border-[#6e6e6e] pl-[3px]">
          <p className="shrink-0 leading-[18px]">*Отмена*</p>
          <p className="shrink-0 leading-[18px]">Укажите противоположный угол:</p>
        </div>
        <input aria-label="Команда" defaultValue="Команда:" className="w-full flex-1 bg-transparent pl-[2px] outline-none" />
      </div>
    </section>
  );
}

const modes = [["ШАГ", "w-[47px]"], ["СЕТКА", "w-[59px]"], ["оПРИВЯЗКА", "w-[95px]", 1], ["3D оПРИВЯЗКА", "w-[117px]", 1], ["ОТС-ОБЪЕКТ", "w-[102px]", 1], ["ОТС-ПОЛЯР", "w-[96px]"], ["ОРТО", "w-[55px]"], ["ДИН-ВВОД", "w-[91px]"], ["ИЗО", "w-[47px]"], null, ["ВЕС", "w-[42px]", 1], ["ШТРИХОВКА", "w-[100px]", 1]];

const statusIcons = [
  ["Подсветка объектов", "w-[28px]", <Svg><path d="M10 2h9v6M2 13v5h9" stroke="#aaa" strokeWidth="1.500" /><circle cx="5" cy="5" r="4.500" fill="#f1edb5" /><path d="M3 10h4v4H3z" fill="#ccc" /><Cursor x={11} y={6} /></Svg>],
  ["Лампа", "w-[28px]", <Svg><circle cx="9" cy="7" r="6.500" fill="#cfcfcf" /><path d="M6 13h6v5H6z" fill="#999" /><circle cx="7" cy="5" r="2.500" fill="#eee" /></Svg>],
  ["Запрет выбора", "w-[33px] pl-[5px]", <Svg><circle cx="10" cy="10" r="8" stroke="#d8353a" strokeWidth="2" /><path d="M15.500 4.500l-11 11" stroke="#d8353a" strokeWidth="2" /><Cursor x={8} y={5} s={0.7} /></Svg>],
  ["Быстрые свойства", "w-[34px] pl-[5px]", <Svg><Cursor x={3} y={1} s={0.8} /><path d="M8 9h10v10H8z" fill="#eee" /><path d="M9 12h8M9 14.500h8M9 17h8" stroke="#555" /></Svg>],
  ["Динамическая ПСК", "w-[33px]", <Svg w={22}><path d="M4 1v17h17M2 4l2-3 2 3M18 15l3 3-3 2" stroke="#d4dce6" strokeWidth="1.300" /><path d="M15 2l-4 7h4l-2 6 5-8h-4z" fill="#a8c0dc" /></Svg>, 1],
  null,
  ["Панорамирование", "w-[33px] pl-[5px]", <Svg><path d="M3 11c-2-2-1-3 1-2l2 2V4c0-2 2-2 2 0v4-6c0-2 2-2 2 0v6-5c0-2 2-2 2 0v6l1-4c0-2 2-2 2 0l-1 9c0 3-2 5-5 5s-4-1-6-8z" fill="#f2f2f2" /></Svg>],
  ["Лупа", "w-[33px] pl-[5px]", <Svg><circle cx="8" cy="7" r="6" fill="#c9ecfa" stroke="#e8f6fc" /><path d="M12 12l6 6" stroke="#4a94ea" strokeWidth="3" /></Svg>],
  ["Показать все", "w-[33px] pl-[5px]", <Svg><path d="M0 0h19v20H0z" fill="#73aef8" /><circle cx="9" cy="9" r="5" stroke="#28425f" strokeWidth="1.500" /><path d="M13 13l4 5" stroke="#28425f" strokeWidth="2" /></Svg>],
  ["Показать рамкой", "w-[33px] pl-[5px]", <Svg w={22}><path d="M1 1h14v11H1z" stroke="#6fa8ee" strokeWidth="1.300" /><circle cx="13" cy="12" r="4.500" fill="#555" stroke={L} /><path d="M16 15l5 5" stroke={L} strokeWidth="1.500" /></Svg>],
  ["Орбита", "w-[33px] pl-[5px]", <Svg><ellipse cx="10" cy="11" rx="9" ry="5" stroke={L} /><path d="M10 1v18M7 4l3-3 3 3M15 12l4 1-1 4" stroke={L} /></Svg>],
  ["Обновить", "w-[33px] pl-[5px]", <Svg><path d="M3.500 13A7 7 0 0 1 13 4M16.500 7A7 7 0 0 1 7 16" stroke="#a4e05a" strokeWidth="2.500" /><path d="M0 11h7l-3 5zM20 9h-7l3-5z" fill="#a4e05a" /></Svg>],
  ["Блокировка панелей", "w-[28px]", <Svg><path d="M1 2h14v4H1z" fill="#999" stroke="#ccc" /><path d="M2 7v6h5M12 11V9c0-3 4-3 4 0v2" stroke="#ccc" strokeWidth="1.500" /><path d="M8 11h11v8H8z" fill="#ddd" /><path d="M13 13h1.500v3H13z" fill="#555" /></Svg>],
  ["Полный экран", "w-[34px] pl-[5px]", <Svg><path d="M3 4h14v12H3z" fill="#1a9ee0" stroke="#e8e8e8" strokeWidth="2" /><path d="M0 4V1h3M17 1h3v3M0 16v3h3M17 19h3v-3" stroke={L} strokeWidth="1.300" /></Svg>],
];

function StatusBar() {
  return (
    <footer className="flex h-[27px] items-stretch bg-[#484848] pt-[2px] text-[14px] text-[#efefef]">
      <div className="w-[218px] shrink-0 border-r border-[#575757] pl-[3px] leading-[24px]">72880.3537,-26998.0179,0.0000</div>
      {modes.map((m, i) =>
        m ? (
          <button key={m[0]} type="button" aria-pressed={!!m[2]} className={"shrink-0 text-center leading-[23px] whitespace-nowrap " + m[1] + (m[2] ? " border border-b-0 border-[#5f92d6] bg-[#526580]" : " border-r border-[#666]")}>{m[0]}</button>
        ) : (
          <span key={i} className="w-[6px] shrink-0" />
        )
      )}
      <div className="flex-1" />
      <button type="button" className="w-[62px] border-r border-[#666] leading-[24px]">МОДЕЛЬ</button>
      <button type="button" aria-label="Блокировка" className="flex w-[28px] items-center justify-center border-r border-[#666]">
        <Svg><path d="M3 10V8c0-3 5-3 5 0v2M12 4V3c0-3 5-3 5 0v3" stroke="#ddd" strokeWidth="1.500" /><path d="M1 10h9v8H1zM11 6h8v6h-8z" fill="#ccc" /><circle cx="5.500" cy="14" r="1.500" fill="#333" /><circle cx="15" cy="9" r="1.200" fill="#333" /></Svg>
      </button>
      <button type="button" aria-label="Меню модели" className="flex w-[24px] items-center justify-center">
        <Svg><path d="M1 1h17v15H1z" fill="#ddd" /><path d="M8 13h11v3l-5 4-6-4z" fill="#fff" /><path d="M9.500 14.500h8l-4 4z" fill="#333" /></Svg>
      </button>
      <div className="w-[147px]" />
      {statusIcons.map((s, i) =>
        s ? (
          <button key={s[0]} type="button" aria-label={s[0]} className={"flex shrink-0 items-center justify-center border-l " + s[1] + (s[3] ? " border border-b-0 border-[#5f92d6] bg-[#526580]" : " border-[#666]")}>{s[2]}</button>
        ) : (
          <button key={i} type="button" className="w-[89px] text-[13px] leading-[20px]">*m1:100</button>
        )
      )}
    </footer>
  );
}

export default function App() {
  return (
    <div className="flex h-screen flex-col overflow-hidden bg-[#4b4b4b] font-['Noto_Sans','Open_Sans',sans-serif] text-[13px] text-[#ececec]">
      <TitleAndTabs />
      <Ribbon />
      <div className="flex min-h-0 flex-1 pt-[2px]">
        <Properties />
        <Documents />
      </div>
      <div className="h-[6px] shrink-0" />
      <CommandLine />
      <StatusBar />
    </div>
  );
}
